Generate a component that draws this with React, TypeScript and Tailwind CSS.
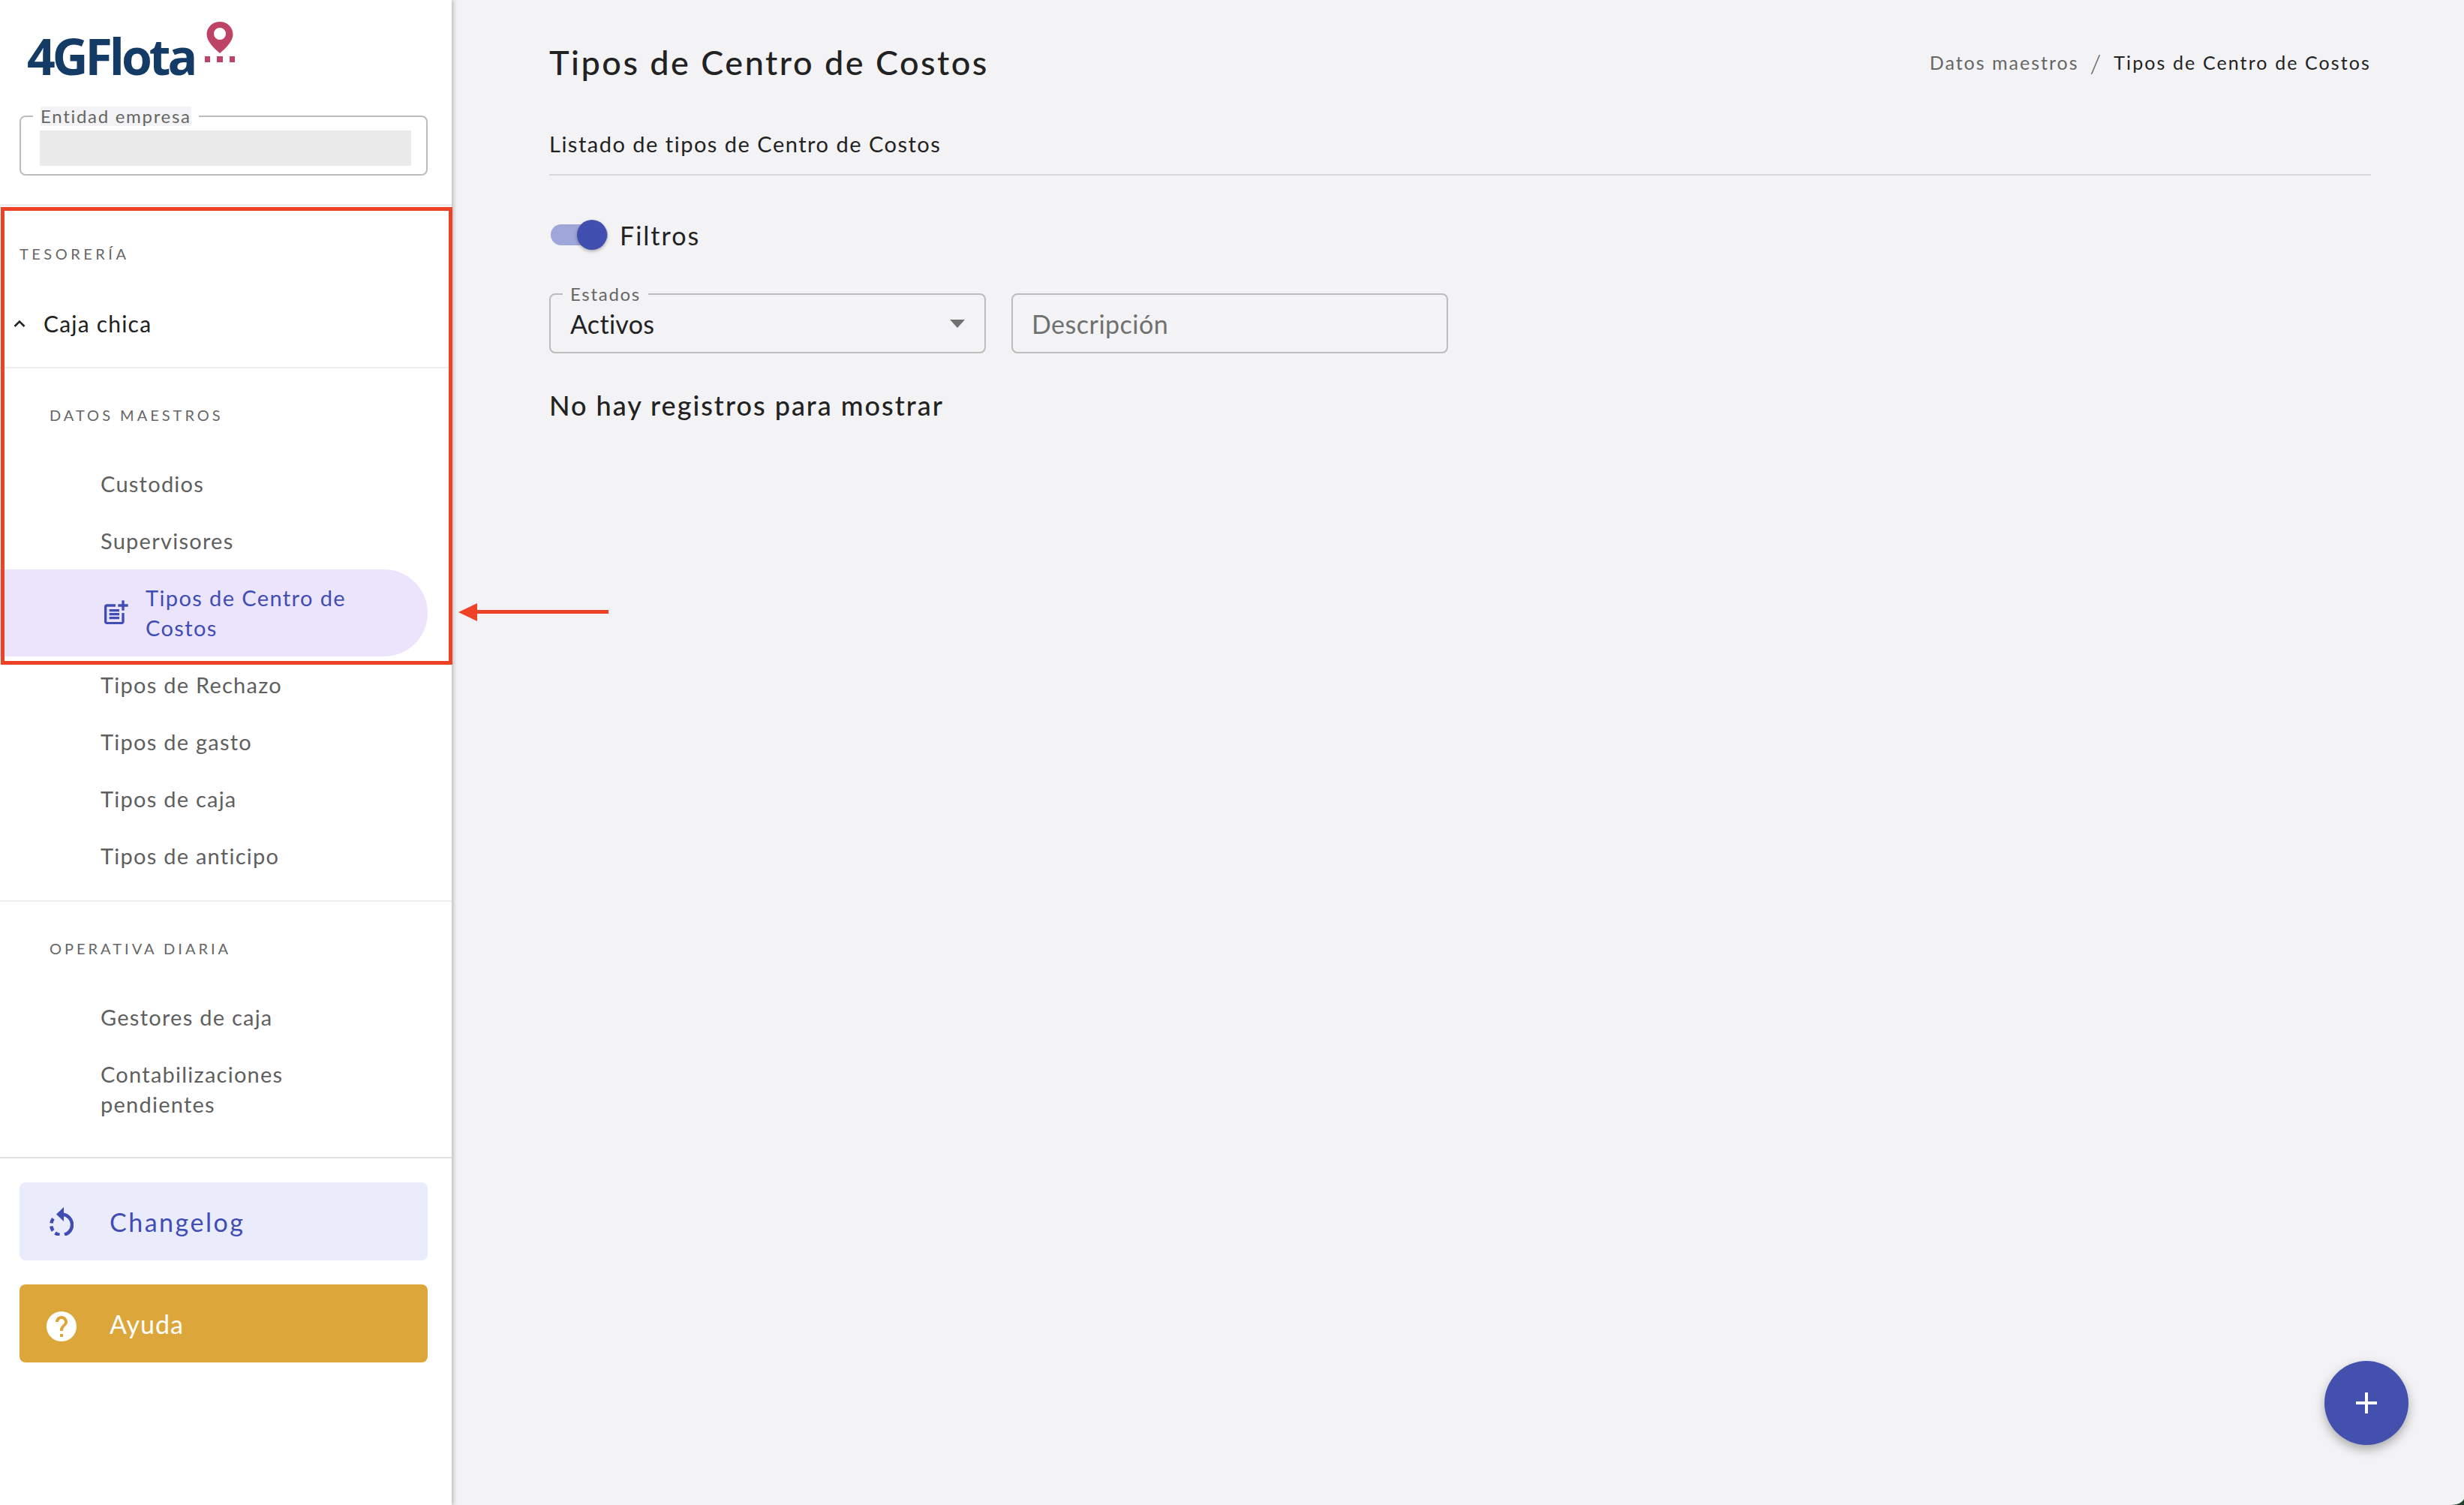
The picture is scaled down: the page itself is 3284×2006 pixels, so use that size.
import React from "react";

const font = "font-['Lato','Liberation_Sans',sans-serif]";

const NavItem = ({ label }: { label: string }) => (
  <div className="h-[76px] flex items-center pl-[134px] text-[29px] tracking-[1.250px] text-[#5f5f5f]">
    {label}
  </div>
);

const SectionLabel = ({ label }: { label: string }) => (
  <div className="h-[24px] flex items-center pl-[66px] text-[20px] tracking-[4px] text-[#666666]">
    {label}
  </div>
);

const Logo = () => (
  <div className="relative h-[76px] w-[280px]">
    <span className="absolute left-0 top-[8px] text-[66px] leading-[72px] font-bold tracking-[-4px] text-[#143a66] font-['Open_Sans',sans-serif]">
      4GFlota
    </span>
    <svg className="absolute left-[237px] top-[-1px]" width="40" height="54" viewBox="0 0 40 54">
      <path
        d="M20 0C10 0 2.500 7.500 2.500 17 2.500 26 12 35 20 42 28 35 37.500 26 37.500 17 37.500 7.500 30 0 20 0zm0 8a8 8 0 1 1 0 16 8 8 0 0 1 0-16z"
        fill="#bd4367"
        fillRule="evenodd"
      />
      <rect x="0" y="46" width="7" height="8" fill="#bd4367" />
      <rect x="16" y="46" width="8" height="8" fill="#bd4367" />
      <rect x="33" y="46" width="7" height="8" fill="#bd4367" />
    </svg>
  </div>
);

const PostAddIcon = () => (
  <svg width="40" height="40" viewBox="0 0 24 24" fill="#3f4db5" className="shrink-0">
    <path d="M17 19.220H5V7h7V5H5c-1.100 0-2 .9-2 2v12c0 1.100.9 2 2 2h12c1.100 0 2-.9 2-2v-7h-2v7.220z" />
    <path d="M19 2h-2v3h-3c.01.01 0 2 0 2h3v2.990c.01.01 2 0 2 0V7h3V5h-3V2zM7 9h8v2H7zM7 12v2h8v-2h-3zM7 15h8v2H7z" />
  </svg>
);

const HistoryIcon = () => (
  <svg width="32" height="38" viewBox="0 0 32 38" fill="none" stroke="#3f4db5" strokeWidth="4.500">
    <path d="M18 9.800A13.750 13.750 0 0 1 20 36.700" />
    <path d="M13.500 37A13.750 13.750 0 0 1 6 14" strokeDasharray="6.500 4" />
    <path d="M19 0 9 9.500 19 19z" fill="#3f4db5" stroke="none" />
  </svg>
);

const HelpIcon = () => (
  <svg width="48" height="48" viewBox="0 0 24 24" fill="#ffffff" className="mt-[8px]">
    <path d="M12 2C6.480 2 2 6.480 2 12s4.480 10 10 10 10-4.480 10-10S17.520 2 12 2zm1 17h-2v-2h2v2zm2.070-7.750l-.9.920C13.450 12.900 13 13.500 13 15h-2v-.5c0-1.100.45-2.100 1.170-2.830l1.240-1.260c.37-.36.59-.86.59-1.410 0-1.100-.9-2-2-2s-2 .9-2 2H8c0-2.210 1.790-4 4-4s4 1.790 4 4c0 .88-.36 1.680-.93 2.250z" />
  </svg>
);

const Outlined = ({
  label,
  children,
  className,
  gapColor,
}: {
  label?: string;
  children: React.ReactNode;
  className: string;
  gapColor?: string;
}) => (
  <div className={`relative border-2 border-[#bcbcbc] rounded-[8px] ${className}`}>
    {label && (
      <span className={`absolute left-[16px] top-[-14px] px-[10px] ${gapColor}`}>
        <span className="block bg-[#f3f3f5] text-[24px] leading-[26px] tracking-[1.700px] text-[#666666]">
          {label}
        </span>
      </span>
    )}
    {children}
  </div>
);

export default function App() {
  return (
    <div className={`relative h-[2006px] w-[3284px] bg-[#f3f3f5] overflow-hidden flex ${font}`}>
      {/* sidebar */}
      <aside className="w-[602px] shrink-0 h-full bg-white shadow-[3px_0_5px_rgba(0,0,0,0.2)] flex flex-col">
        <div className="pl-[36px] pt-[30px] h-[143px]">
          <Logo />
        </div>
        <div className="px-[26px]">
          <Outlined label="Entidad empresa" gapColor="bg-white" className="h-[80px] w-[544px] mt-[11px] pt-[18px] pl-[25px]">
            <div className="h-[47px] w-[495px] bg-[#eaeaea]" />
          </Outlined>
        </div>
        <div className="mt-[38px] h-[3px] bg-[#eeeeee]" />
        <div className="mt-[51px] pl-[26px] h-[24px] text-[20px] tracking-[4.500px] text-[#666666] flex items-center">
          TESORERÍA
        </div>
        <div className="mt-[43px] h-[76px] flex items-center pl-[18px] text-[30px] tracking-[1.200px] text-[#222222]">
          <svg width="16" height="10" viewBox="0 0 16 10" fill="none" stroke="#222222" strokeWidth="2.500">
            <path d="M1.500 9 8 2.500 14.500 9" />
          </svg>
          <span className="ml-[24px]">Caja chica</span>
        </div>
        <div className="mt-[20px] h-[2px] bg-[#eeeeee]" />
        <div className="pt-[50px] pb-[42px]">
          <SectionLabel label="DATOS MAESTROS" />
        </div>
        <NavItem label="Custodios" />
        <NavItem label="Supervisores" />
        <div className="h-[116px] w-[570px] bg-[#ece4fb] rounded-r-[58px] flex items-center pl-[134px] text-[#3f4db5]">
          <PostAddIcon />
          <span className="ml-[20px] text-[29px] leading-[40px] tracking-[1.400px] w-[320px]">Tipos de Centro de Costos</span>
        </div>
        <NavItem label="Tipos de Rechazo" />
        <NavItem label="Tipos de gasto" />
        <NavItem label="Tipos de caja" />
        <NavItem label="Tipos de anticipo" />
        <div className="mt-[21px] h-[2px] bg-[#eeeeee]" />
        <div className="pt-[50px] pb-[42px]">
          <SectionLabel label="OPERATIVA DIARIA" />
        </div>
        <NavItem label="Gestores de caja" />
        <div className="h-[116px] pl-[134px] flex items-center text-[29px] leading-[40px] tracking-[1.250px] text-[#5f5f5f]">
          <span className="w-[340px]">Contabilizaciones pendientes</span>
        </div>
        <div className="mt-[32px] h-[2px] bg-[#e0e0e0]" />
        <div className="pl-[26px] pr-[32px] pt-[32px] flex flex-col gap-[32px]">
          <div className="h-[104px] rounded-[8px] bg-[#ebecfb] flex items-center text-[#3f4db5] text-[34px] tracking-[2.500px]">
            <div className="w-[112px] flex justify-center">
              <HistoryIcon />
            </div>
            <span className="ml-[8px]">Changelog</span>
          </div>
          <div className="h-[104px] rounded-[8px] bg-[#dca63a] flex items-center text-white text-[34px] tracking-[1px]">
            <div className="w-[112px] flex justify-center">
              <HelpIcon />
            </div>
            <span className="ml-[8px]">Ayuda</span>
          </div>
        </div>
      </aside>

      {/* content */}
      <main className="flex-1 pl-[130px] pr-[124px] pt-[56px]">
        <div className="flex items-center justify-between h-[56px]">
          <h1 className="text-[45px] font-medium text-[#222222] tracking-[2.500px]">Tipos de Centro de Costos</h1>
          <div className="flex items-center text-[25px] tracking-[2px]">
            <span className="text-[#666666]">Datos maestros</span>
            <span className="mx-[15px] text-[34px] font-light leading-none text-[#555555]">/</span>
            <span className="text-[#222222] tracking-[2.100px]">Tipos de Centro de Costos</span>
          </div>
        </div>
        <div className="mt-[60px] h-[40px] flex items-center text-[29px] tracking-[1.500px] text-[#222222]">
          Listado de tipos de Centro de Costos
        </div>
        <div className="mt-[20px] h-[2px] bg-[#d8d8da]" />
        <div className="mt-[59px] h-[40px] flex items-center">
          <div className="relative w-[76px] h-[28px] rounded-full bg-[#9fa6d9] ml-[2px]">
            <div className="absolute right-[1px] top-[-6px] w-[40px] h-[40px] rounded-full bg-[#414fb0] shadow-[0_2px_4px_rgba(0,0,0,0.3)]" />
          </div>
          <span className="ml-[16px] text-[34px] tracking-[2px] text-[#222222]">Filtros</span>
        </div>
        <div className="mt-[58px] flex gap-[34px]">
          <Outlined label="Estados" gapColor="bg-[#f3f3f5]" className="w-[582px] h-[80px] flex items-center pl-[26px] pr-[26px] justify-between">
            <span className="text-[34px] tracking-[0.300px] text-[#222222]">Activos</span>
            <div className="w-0 h-0 border-x-[10px] border-x-transparent border-t-[11px] border-t-[#707070]" />
          </Outlined>
          <Outlined className="w-[582px] h-[80px] flex items-center pl-[25px]">
            <span className="text-[34px] tracking-[0.500px] text-[#707070]">Descripción</span>
          </Outlined>
        </div>
        <div className="mt-[47px] h-[44px] flex items-center text-[36px] font-medium tracking-[2px] text-[#222222]">
          No hay registros para mostrar
        </div>
      </main>

      {/* add button */}
      <button className="absolute left-[3098px] top-[1814px] w-[112px] h-[112px] rounded-full bg-[#4350ae] shadow-[0_6px_14px_rgba(0,0,0,0.3)] flex items-center justify-center">
        <svg width="28" height="28" viewBox="0 0 28 28" fill="#ffffff">
          <rect x="12" y="0" width="4" height="28" />
          <rect x="0" y="12" width="28" height="4" />
        </svg>
      </button>

      {/* window corner */}
      <svg className="absolute right-0 bottom-0" width="17" height="8" viewBox="0 0 17 8">
        <path d="M17 0Q14 7 0 8H17z" fill="#24402c" />
      </svg>

      {/* red annotation */}
      <div className="absolute left-[1px] top-[276px] w-[602px] h-[610px] border-[5px] border-[#ee4226]" />
      <div className="absolute left-[611px] top-[803px] flex items-center h-[25px]">
        <div className="w-0 h-0 border-y-[12px] border-y-transparent border-r-[25px] border-r-[#ee4226]" />
        <div className="w-[175px] h-[5px] bg-[#ee4226]" />
      </div>
    </div>
  );
}
